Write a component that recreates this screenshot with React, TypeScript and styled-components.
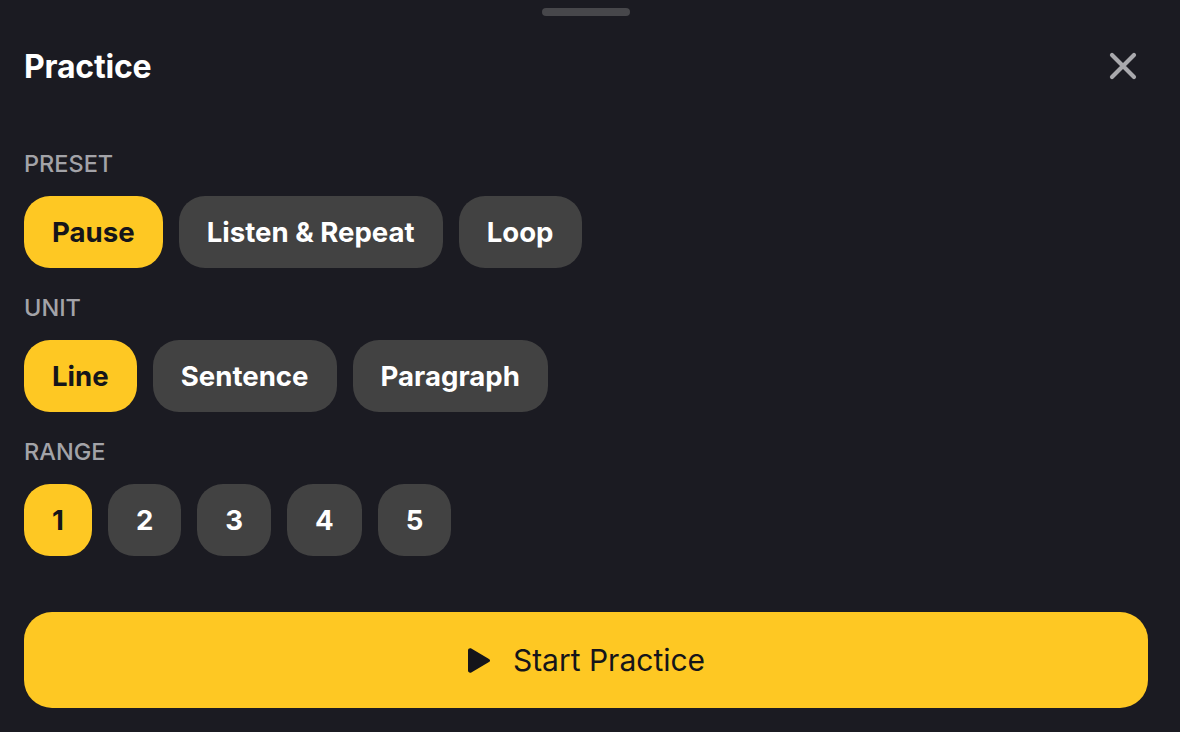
import React, { useState } from 'react';
import styled, { createGlobalStyle } from 'styled-components';

const GlobalStyle = createGlobalStyle`
  html, body {
    margin: 0;
    padding: 0;
    background: #1b1b22;
  }
  body {
    font-family: Inter, 'Noto Sans', sans-serif;
    -webkit-font-smoothing: antialiased;
  }
`;

const Sheet = styled.div`
  width: 1180px;
  height: 732px;
  box-sizing: border-box;
  background: #1b1b22;
  padding: 8px 32px 0 24px;
  display: flex;
  flex-direction: column;
`;

const Handle = styled.div`
  align-self: center;
  width: 88px;
  height: 8px;
  border-radius: 4px;
  background: #47474b;
`;

const Header = styled.div`
  display: flex;
  align-items: center;
  justify-content: space-between;
  margin-top: 30px;
  height: 40px;
`;

const Title = styled.h1`
  margin: 0;
  font-size: 32px;
  font-weight: 700;
  color: #ffffff;
  letter-spacing: -0.2px;
`;

const CloseButton = styled.button`
  background: none;
  border: 0;
  padding: 0;
  width: 32px;
  height: 32px;
  display: flex;
  align-items: center;
  justify-content: center;
  color: #a9a9ad;
  cursor: pointer;
  margin-right: 9px;
`;

const Section = styled.div`
  display: flex;
  flex-direction: column;
`;

const Label = styled.div<{ $top: number }>`
  margin-top: ${(p) => p.$top}px;
  font-size: 23.5px;
  line-height: 28px;
  font-weight: 500;
  color: #a3a3a8;
  margin-bottom: 18px;
`;

const ChipRow = styled.div`
  display: flex;
  gap: 16px;
`;

const Chip = styled.button<{ $active: boolean }>`
  height: 72px;
  padding: 0 28px;
  border: 0;
  border-radius: 26px;
  font-family: inherit;
  font-size: 27.6px;
  font-weight: 700;
  color: ${(p) => (p.$active ? '#15151a' : '#ffffff')};
  background: ${(p) => (p.$active ? '#fec823' : '#424242')};
  cursor: pointer;
`;

const StartButton = styled.button`
  margin-top: 56px;
  height: 96px;
  width: 100%;
  border: 0;
  border-radius: 28px;
  background: #fec823;
  color: #15151a;
  font-family: inherit;
  font-size: 30px;
  font-weight: 400;
  display: flex;
  align-items: center;
  justify-content: center;
  gap: 22px;
  cursor: pointer;
`;

const presets = ['Pause', 'Listen & Repeat', 'Loop'];
const units = ['Line', 'Sentence', 'Paragraph'];
const ranges = ['1', '2', '3', '4', '5'];

export default function App() {
  const [preset, setPreset] = useState('Pause');
  const [unit, setUnit] = useState('Line');
  const [range, setRange] = useState('1');

  return (
    <>
      <GlobalStyle />
      <Sheet>
        <Handle />
        <Header>
          <Title>Practice</Title>
          <CloseButton aria-label="Close">
            <svg width="28" height="28" viewBox="0 0 28 28" fill="none">
              <path d="M3 3L25 25M25 3L3 25" stroke="currentColor" strokeWidth="4.2" strokeLinecap="round" />
            </svg>
          </CloseButton>
        </Header>

        <Section>
          <Label $top={64}>PRESET</Label>
          <ChipRow>
            {presets.map((p) => (
              <Chip key={p} $active={p === preset} onClick={() => setPreset(p)}>
                {p}
              </Chip>
            ))}
          </ChipRow>
        </Section>

        <Section>
          <Label $top={26}>UNIT</Label>
          <ChipRow>
            {units.map((u) => (
              <Chip key={u} $active={u === unit} onClick={() => setUnit(u)}>
                {u}
              </Chip>
            ))}
          </ChipRow>
        </Section>

        <Section>
          <Label $top={26}>RANGE</Label>
          <ChipRow>
            {ranges.map((r) => (
              <Chip key={r} $active={r === range} onClick={() => setRange(r)}>
                {r}
              </Chip>
            ))}
          </ChipRow>
        </Section>

        <StartButton>
          <svg width="24" height="27" viewBox="0 0 24 27">
            <path d="M1 3.4C1 1.6 2.9 0.6 4.3 1.5L22 11.9C23.4 12.7 23.4 14.3 22 15.1L4.3 25.5C2.9 26.4 1 25.4 1 23.6Z" fill="#15151a" />
          </svg>
          Start Practice
        </StartButton>
      </Sheet>
    </>
  );
}
